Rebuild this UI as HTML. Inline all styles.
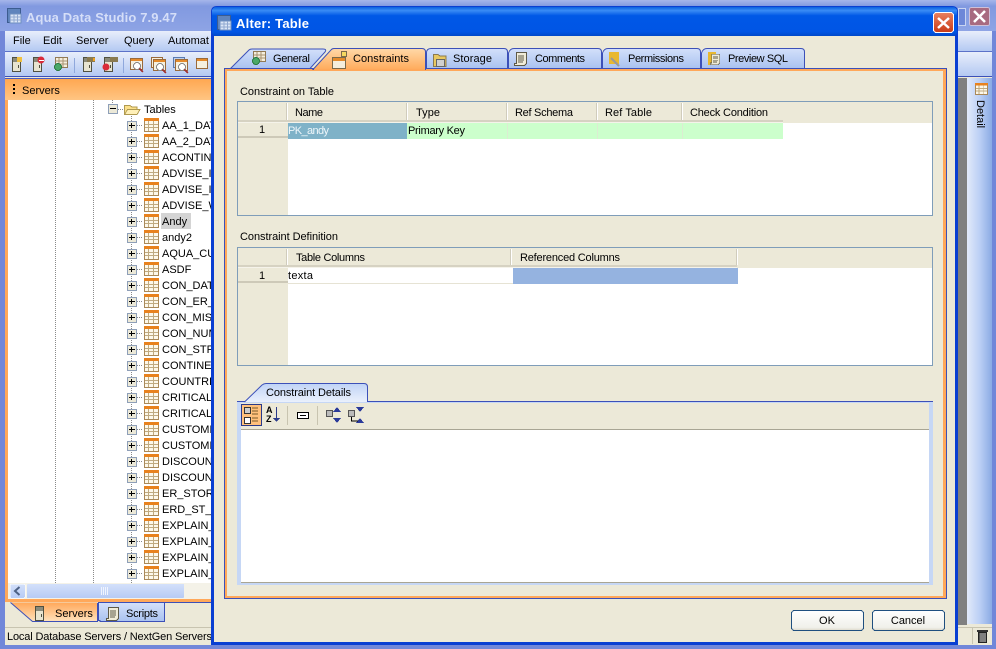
<!DOCTYPE html>
<html><head><meta charset="utf-8"><style>
html,body{margin:0;padding:0;background:#ece9d8;overflow:hidden}
svg{display:block}
text{font-family:"Liberation Sans",sans-serif;font-size:11px;fill:#000}
.t{font-weight:bold;font-size:13px}
</style></head><body>
<svg width="996" height="649" viewBox="0 0 996 649" xmlns="http://www.w3.org/2000/svg" shape-rendering="crispEdges">
<defs>
<linearGradient id="bar" x1="0" y1="0" x2="0" y2="1"><stop offset="0" stop-color="#e8eefb"/><stop offset="1" stop-color="#b4c9f2"/></linearGradient>
<linearGradient id="mtitle" x1="0" y1="0" x2="0" y2="1"><stop offset="0" stop-color="#a6b6ea"/><stop offset=".2" stop-color="#8199e0"/><stop offset="1" stop-color="#8ea4e5"/></linearGradient>
<linearGradient id="dtitle" x1="0" y1="0" x2="0" y2="1"><stop offset="0" stop-color="#0a5fdf"/><stop offset=".12" stop-color="#3a8cf5"/><stop offset=".3" stop-color="#0058e6"/><stop offset=".85" stop-color="#0055e5"/><stop offset="1" stop-color="#0048c8"/></linearGradient>
<linearGradient id="orange" x1="0" y1="0" x2="0" y2="1"><stop offset="0" stop-color="#ffa64f"/><stop offset="1" stop-color="#ffc98a"/></linearGradient>
<linearGradient id="orangeL" x1="0" y1="0" x2="0" y2="1"><stop offset="0" stop-color="#ffa85a"/><stop offset="1" stop-color="#ffe2bc"/></linearGradient>
<linearGradient id="orangeD" x1="0" y1="0" x2="0" y2="1"><stop offset="0" stop-color="#ffd9a8"/><stop offset="1" stop-color="#ffab5c"/></linearGradient>
<linearGradient id="tab" x1="0" y1="0" x2="0" y2="1"><stop offset="0" stop-color="#d3e0fa"/><stop offset="1" stop-color="#a9c2f0"/></linearGradient>
<linearGradient id="tabL" x1="0" y1="0" x2="0" y2="1"><stop offset="0" stop-color="#c0d3f6"/><stop offset="1" stop-color="#eaf0fc"/></linearGradient>
<linearGradient id="vtab" x1="0" y1="0" x2="1" y2="0"><stop offset="0" stop-color="#e2eafa"/><stop offset=".5" stop-color="#bcd0f5"/><stop offset="1" stop-color="#8aaae4"/></linearGradient>
<linearGradient id="sb" x1="0" y1="0" x2="0" y2="1"><stop offset="0" stop-color="#d3e0fa"/><stop offset="1" stop-color="#b7cbf5"/></linearGradient>
<linearGradient id="btn" x1="0" y1="0" x2="0" y2="1"><stop offset="0" stop-color="#fff"/><stop offset=".85" stop-color="#f0f0ea"/><stop offset="1" stop-color="#dcd8c8"/></linearGradient>
<linearGradient id="red" x1="0" y1="0" x2="0" y2="1"><stop offset="0" stop-color="#e9815f"/><stop offset="1" stop-color="#c93a16"/></linearGradient>
<symbol id="plus" width="10" height="10" viewBox="0 0 10 10"><rect x=".5" y=".5" width="9" height="9" fill="#ece9d8" stroke="#8e9fb8"/><path d="M2 4.500H8M4.500 2V7" stroke="#000"/></symbol>
<symbol id="minus" width="10" height="10" viewBox="0 0 10 10"><rect x=".5" y=".5" width="9" height="9" fill="#ece9d8" stroke="#8e9fb8"/><path d="M2 4.500H8" stroke="#000"/></symbol>
<symbol id="tbl" width="15" height="14" viewBox="0 0 15 14"><rect x=".5" y=".5" width="14" height="13" fill="#fdf8ea" stroke="#a98858"/><rect x="0" y="0" width="15" height="3" fill="#e8821e"/><path d="M1 6.500H14M1 9.500H14M4.500 3V13M9.500 3V13" stroke="#c0aa80"/></symbol>
<symbol id="app" width="15" height="16" viewBox="0 0 15 16"><rect x=".5" y=".5" width="13" height="14" fill="#5f84bd" stroke="#3c5c90"/><rect x="3" y="6" width="11" height="9" fill="#dbe6f6" stroke="#6f8fc0" stroke-width=".7"/><path d="M3 9H14M3 12H14M7 6V15M10.500 6V15" stroke="#90a8d0"/></symbol>
<symbol id="srv" width="12" height="17" viewBox="0 0 12 17"><rect x="2.500" y="1.500" width="8" height="14" fill="#e8e4d0" stroke="#505040"/><rect x="3" y="2" width="7" height="4" fill="#8a8a7a"/><rect x="8" y="9" width="1" height="3" fill="#505040"/></symbol>
<symbol id="grid" width="15" height="14" viewBox="0 0 15 14"><rect x="2.500" y=".5" width="12" height="10" fill="#f5eedc" stroke="#927a55"/><path d="M3 4H14M3 7H14M6 1V10M10 1V10" stroke="#a89270"/><circle cx="5" cy="10" r="3.500" fill="#4aa868" stroke="#2c7a45"/></symbol>
<symbol id="find" width="16" height="16" viewBox="0 0 16 16"><rect x=".5" y=".5" width="12" height="11" fill="#f5f0e0" stroke="#9a6a3a"/><rect x="1" y="1" width="11" height="2" fill="#e58a2a"/><circle cx="7" cy="8" r="3.500" fill="#fff" stroke="#888"/><path d="M9.500 10.500L13 14" stroke="#a03030" stroke-width="1.500"/></symbol>
<symbol id="scroll" width="15" height="16" viewBox="0 0 15 16"><path d="M3.500 1.500H13.500V12.500L11.500 14.500H1.500V12.500H3.500Z" fill="#f0ecd8" stroke="#5e5a48"/><path d="M5 5H11M5 7H11M5 9H11M5 11H10" stroke="#5e5a48"/></symbol>
</defs>

<!-- main window -->
<rect width="996" height="649" fill="#7187d9"/>
<rect x="0" y="0" width="996" height="31" fill="url(#mtitle)"/>
<rect x="5" y="31" width="987" height="20" fill="url(#bar)"/>
<rect x="5" y="51" width="987" height="1" fill="#5c72c8"/>
<rect x="5" y="52" width="987" height="24" fill="url(#bar)"/>
<rect x="5" y="76" width="987" height="1" fill="#3c50b8"/>
<rect x="5" y="77" width="987" height="550" fill="#ece9d8"/>
<rect x="5" y="627" width="987" height="1" fill="#c8c4b0"/>
<rect x="5" y="628" width="987" height="17" fill="#ece9d8"/>
<use href="#app" x="7" y="8"/>
<text x="26" y="22" class="t" style="fill:#d5def8" textLength="151">Aqua Data Studio 7.9.47</text>
<text x="13" y="44">File</text><text x="43" y="44">Edit</text><text x="76" y="44">Server</text><text x="124" y="44">Query</text><text x="168" y="44">Automat</text>

<!-- toolbar -->
<use href="#srv" x="10" y="56"/><rect x="17" y="57" width="5" height="5" fill="#f0c040"/>
<use href="#srv" x="31" y="56"/><circle cx="41" cy="60" r="3.500" fill="#d92b3a" shape-rendering="auto"/><rect x="39" y="60" width="5" height="1" fill="#fff"/>
<use href="#grid" x="53" y="57"/>
<rect x="74" y="58" width="1" height="15" fill="#8fa8dc"/>
<use href="#srv" x="81" y="56"/><rect x="87" y="57" width="8" height="5" fill="#8a7a50"/><rect x="93" y="58" width="2" height="3" fill="#f0a020"/>
<use href="#srv" x="102" y="56"/><circle cx="106" cy="67" r="3.500" fill="#d92b3a" shape-rendering="auto"/><rect x="110" y="57" width="8" height="5" fill="#8a7a50"/>
<rect x="123" y="58" width="1" height="15" fill="#8fa8dc"/>
<use href="#find" x="130" y="58"/>
<rect x="151.500" y="57.500" width="11" height="10" fill="#f5f0e0" stroke="#9a6a3a"/><use href="#find" x="153" y="59"/>
<rect x="173.500" y="57.500" width="11" height="10" fill="#bcd0f0" stroke="#5a7ab0"/><use href="#find" x="175" y="59"/>
<rect x="196.500" y="58.500" width="11" height="10" fill="#f5f0e0" stroke="#9a6a3a"/><rect x="197" y="59" width="10" height="2" fill="#e58a2a"/>

<!-- servers panel -->
<rect x="5" y="78" width="206" height="25" fill="url(#orange)"/>
<rect x="5" y="78" width="206" height="1" fill="#4a5cc0"/>
<rect x="5" y="100" width="3" height="502" fill="#ffa85a"/>
<rect x="5" y="599" width="206" height="3" fill="#ffa85a"/>
<rect x="98" y="602" width="113" height="1" fill="#3c50b8"/>
<rect x="13" y="84" width="2" height="2" fill="#000"/><rect x="13" y="88" width="2" height="2" fill="#000"/><rect x="13" y="92" width="2" height="2" fill="#000"/>
<text x="22" y="94">Servers</text>
<rect x="8" y="100" width="203" height="483" fill="#fff"/>
<path d="M55.500 100V583M93.500 100V583M131.500 114V583M112.500 100V105" stroke="#8a8a8a" stroke-dasharray="1 1" fill="none"/>
<use href="#minus" x="108" y="104"/>
<path d="M118 109.500H123" stroke="#8a8a8a" stroke-dasharray="1 1"/>
<path d="M124.500 114.500V105.500H130L132 107H137V114.500Z" fill="#fbe08a" stroke="#b09a50"/><path d="M124.500 114.500L127.500 109.500H140L137 114.500Z" fill="#fff0b8" stroke="#b09a50"/>
<text x="144" y="113">Tables</text>
<rect x="161" y="213" width="30" height="16" fill="#d4d4d4"/>
<path d="M137 125.500H143M137 141.500H143M137 157.500H143M137 173.500H143M137 189.500H143M137 205.500H143M137 221.500H143M137 237.500H143M137 253.500H143M137 269.500H143M137 285.500H143M137 301.500H143M137 317.500H143M137 333.500H143M137 349.500H143M137 365.500H143M137 381.500H143M137 397.500H143M137 413.500H143M137 429.500H143M137 445.500H143M137 461.500H143M137 477.500H143M137 493.500H143M137 509.500H143M137 525.500H143M137 541.500H143M137 557.500H143M137 573.500H143" stroke="#8a8a8a" stroke-dasharray="1 1"/>
<g id="rows">
<g><use href="#plus" x="127" y="121"/><use href="#tbl" x="144" y="118"/><text x="162" y="129">AA_1_DAT</text></g>
<g><use href="#plus" x="127" y="137"/><use href="#tbl" x="144" y="134"/><text x="162" y="145">AA_2_DAT</text></g>
<g><use href="#plus" x="127" y="153"/><use href="#tbl" x="144" y="150"/><text x="162" y="161">ACONTINE</text></g>
<g><use href="#plus" x="127" y="169"/><use href="#tbl" x="144" y="166"/><text x="162" y="177">ADVISE_IN</text></g>
<g><use href="#plus" x="127" y="185"/><use href="#tbl" x="144" y="182"/><text x="162" y="193">ADVISE_IN</text></g>
<g><use href="#plus" x="127" y="201"/><use href="#tbl" x="144" y="198"/><text x="162" y="209">ADVISE_W</text></g>
<g><use href="#plus" x="127" y="217"/><use href="#tbl" x="144" y="214"/><text x="162" y="225">Andy</text></g>
<g><use href="#plus" x="127" y="233"/><use href="#tbl" x="144" y="230"/><text x="162" y="241">andy2</text></g>
<g><use href="#plus" x="127" y="249"/><use href="#tbl" x="144" y="246"/><text x="162" y="257">AQUA_CU</text></g>
<g><use href="#plus" x="127" y="265"/><use href="#tbl" x="144" y="262"/><text x="162" y="273">ASDF</text></g>
<g><use href="#plus" x="127" y="281"/><use href="#tbl" x="144" y="278"/><text x="162" y="289">CON_DAT</text></g>
<g><use href="#plus" x="127" y="297"/><use href="#tbl" x="144" y="294"/><text x="162" y="305">CON_ER_</text></g>
<g><use href="#plus" x="127" y="313"/><use href="#tbl" x="144" y="310"/><text x="162" y="321">CON_MISC</text></g>
<g><use href="#plus" x="127" y="329"/><use href="#tbl" x="144" y="326"/><text x="162" y="337">CON_NUM</text></g>
<g><use href="#plus" x="127" y="345"/><use href="#tbl" x="144" y="342"/><text x="162" y="353">CON_STR</text></g>
<g><use href="#plus" x="127" y="361"/><use href="#tbl" x="144" y="358"/><text x="162" y="369">CONTINEN</text></g>
<g><use href="#plus" x="127" y="377"/><use href="#tbl" x="144" y="374"/><text x="162" y="385">COUNTRIE</text></g>
<g><use href="#plus" x="127" y="393"/><use href="#tbl" x="144" y="390"/><text x="162" y="401">CRITICAL</text></g>
<g><use href="#plus" x="127" y="409"/><use href="#tbl" x="144" y="406"/><text x="162" y="417">CRITICAL</text></g>
<g><use href="#plus" x="127" y="425"/><use href="#tbl" x="144" y="422"/><text x="162" y="433">CUSTOME</text></g>
<g><use href="#plus" x="127" y="441"/><use href="#tbl" x="144" y="438"/><text x="162" y="449">CUSTOME</text></g>
<g><use href="#plus" x="127" y="457"/><use href="#tbl" x="144" y="454"/><text x="162" y="465">DISCOUNT</text></g>
<g><use href="#plus" x="127" y="473"/><use href="#tbl" x="144" y="470"/><text x="162" y="481">DISCOUNT</text></g>
<g><use href="#plus" x="127" y="489"/><use href="#tbl" x="144" y="486"/><text x="162" y="497">ER_STORA</text></g>
<g><use href="#plus" x="127" y="505"/><use href="#tbl" x="144" y="502"/><text x="162" y="513">ERD_ST_T</text></g>
<g><use href="#plus" x="127" y="521"/><use href="#tbl" x="144" y="518"/><text x="162" y="529">EXPLAIN_</text></g>
<g><use href="#plus" x="127" y="537"/><use href="#tbl" x="144" y="534"/><text x="162" y="545">EXPLAIN_</text></g>
<g><use href="#plus" x="127" y="553"/><use href="#tbl" x="144" y="550"/><text x="162" y="561">EXPLAIN_</text></g>
<g><use href="#plus" x="127" y="569"/><use href="#tbl" x="144" y="566"/><text x="162" y="577">EXPLAIN_</text></g>
</g>
<!-- scrollbar -->
<rect x="8" y="583" width="203" height="16" fill="#f4f2e8"/>
<rect x="10" y="584" width="15" height="14" rx="1" fill="url(#sb)" stroke="#fff" stroke-width=".5"/>
<path d="M19.500 587L15 591L19.500 595" fill="none" stroke="#4d6185" stroke-width="2" shape-rendering="auto"/>
<rect x="27" y="584" width="157" height="14" rx="1" fill="url(#sb)"/>
<path d="M101.500 587V595M103.500 587V595M105.500 587V595M107.500 587V595" stroke="#f0f4fe"/>
<!-- bottom tabs -->
<path d="M10.500 602.500L32.500 621.500H97.500V602.500Z" fill="url(#orangeL)" stroke="none" shape-rendering="auto"/>
<path d="M10.500 602.500L32.500 621.500H97.500V603" fill="none" stroke="#3c50b8" shape-rendering="auto"/>
<use href="#srv" x="33" y="605"/>
<text x="55" y="617">Servers</text>
<path d="M98.500 603V620.500H100V621.500H164.500V603" fill="url(#tab)" stroke="#3c50b8"/>
<use href="#scroll" x="105" y="606"/>
<text x="126" y="617" textLength="32">Scripts</text>
<text x="7" y="640" textLength="205">Local Database Servers / NextGen Servers</text>

<!-- right of dialog -->
<rect x="958.500" y="8.500" width="7" height="17" fill="#6d87d8" stroke="#c8d4f2"/>
<rect x="969.500" y="7.500" width="20" height="18" rx="2" fill="#a86a80" stroke="#cfc0d8"/>
<path d="M974 11L985 22M985 11L974 22" stroke="#fff" stroke-width="2.500" shape-rendering="auto"/>
<rect x="958" y="78" width="9" height="547" fill="#808080"/>
<rect x="967" y="78" width="25" height="546" fill="url(#vtab)"/>
<rect x="992" y="31" width="4" height="618" fill="#7187d9"/>
<use href="#tbl" x="974" y="83" width="15" height="12"/>
<text transform="translate(977,100) rotate(90)">Detail</text>
<rect x="972" y="628" width="1" height="16" fill="#c8c4b0"/>
<rect x="978.500" y="632.500" width="8" height="10" fill="#555" stroke="#222"/><rect x="977" y="630" width="11" height="2" fill="#333"/><path d="M981 633V642M983 633V642M985 633V642" stroke="#aaa"/>

<!-- dialog -->
<path d="M211 645V12Q211 6 217 6H952Q958 6 958 12V645Z" fill="#0a3fd2" shape-rendering="auto"/>
<rect x="212" y="7" width="745" height="29" rx="4" fill="url(#dtitle)"/>
<rect x="214" y="36" width="741" height="606" fill="#ece9d8"/>
<use href="#app" x="217" y="15"/>
<text x="236" y="28" class="t" style="fill:#fff" textLength="73">Alter: Table</text>
<rect x="933.500" y="12.500" width="20" height="20" rx="3" fill="url(#red)" stroke="#fff"/>
<path d="M938 18L949 28M949 18L938 28" stroke="#fff" stroke-width="2.500" shape-rendering="auto"/>

<!-- tab panel -->
<rect x="224.500" y="68.500" width="722" height="530" fill="#ffa85a" stroke="#3c50b8"/>
<rect x="225" y="69" width="721" height="529" fill="#ffa85a"/>
<rect x="227" y="71" width="716" height="525" fill="#ece9d8"/>
<!-- tabs -->
<g shape-rendering="auto">
<path d="M230.500 68.500L249 50Q250 49 252 49H323Q327 49 325 52L310 68.500Z" fill="url(#tab)" stroke="#3c50b8"/>
<path d="M426.500 68.500V53Q426.500 48.500 431 48.500H504Q507.500 48.500 507.500 52V68.500Z" fill="url(#tab)" stroke="#3c50b8"/>
<path d="M508.500 68.500V53Q510 48.500 514 48.500H598Q601.500 48.500 601.500 52V68.500Z" fill="url(#tab)" stroke="#3c50b8"/>
<path d="M602.500 68.500V53Q604 48.500 608 48.500H697Q700.500 48.500 700.500 52V68.500Z" fill="url(#tab)" stroke="#3c50b8"/>
<path d="M701.500 68.500V53Q703 48.500 707 48.500H801Q804.500 48.500 804.500 52V68.500Z" fill="url(#tab)" stroke="#3c50b8"/>
<path d="M313 69.500L331 50Q332 48.500 334 48.500H422Q425.500 48.500 425.500 52V69.500Z" fill="url(#orangeD)" stroke="#3c50b8"/>
</g>
<rect x="314" y="69" width="111" height="2" fill="#ffa85a"/>
<use href="#grid" x="251" y="51"/>
<rect x="332.500" y="57.500" width="13" height="11" fill="#f5eedc" stroke="#7a6a4a"/><rect x="333" y="58" width="12" height="3" fill="#e58a2a"/><rect x="341.500" y="51.500" width="5" height="5" fill="#f5d860" stroke="#7a6a4a"/>
<path d="M433.500 54.500H438L440 56H446V66.500H433.500Z" fill="#e8c860" stroke="#8a7a50"/><rect x="436.500" y="59.500" width="8" height="7" fill="#d0d0d0" stroke="#666"/>
<use href="#scroll" x="513" y="51"/>
<rect x="609" y="52" width="10" height="12" fill="#e8b830"/><path d="M611 58L619 66" stroke="#999" stroke-width="2" shape-rendering="auto"/>
<rect x="708" y="52" width="8" height="13" fill="#e8b830"/><use href="#scroll" x="709" y="53" width="12" height="13"/>
<text x="273" y="62" textLength="37">General</text><text x="353" y="62" textLength="56">Constraints</text><text x="453" y="62" textLength="39">Storage</text><text x="535" y="62" textLength="50">Comments</text><text x="628" y="62" textLength="56">Permissions</text><text x="728" y="62" textLength="60">Preview SQL</text>

<!-- Constraint on Table -->
<text x="240" y="95" textLength="94">Constraint on Table</text>
<rect x="237.500" y="101.500" width="695" height="114" fill="#ece9d8" stroke="#7f9db9"/>
<rect x="288" y="123" width="644" height="92" fill="#fff"/>
<rect x="238" y="120" width="545" height="2" fill="#d6d2c2"/>
<rect x="238" y="122" width="545" height="1" fill="#f5f3ea"/>
<path d="M286.500 103V120M406.500 103V120M506.500 103V120M596.500 103V120M681.500 103V120" stroke="#d0ccbc"/>
<path d="M287.500 103V120M407.500 103V120M507.500 103V120M597.500 103V120M682.500 103V120" stroke="#fff"/>
<rect x="288" y="123" width="119" height="16" fill="#7fb2c8"/>
<rect x="407" y="123" width="376" height="16" fill="#ccffcc"/>
<path d="M507.500 123V139M597.500 123V139M682.500 123V139" stroke="#dcecd2"/>
<rect x="238" y="136" width="50" height="2" fill="#cdc9b8"/>
<text x="295" y="116" textLength="28">Name</text><text x="416" y="116" textLength="24">Type</text><text x="515" y="116" textLength="58">Ref Schema</text><text x="605" y="116" textLength="47">Ref Table</text><text x="690" y="116" textLength="78">Check Condition</text>
<text x="259" y="133">1</text>
<text x="288" y="134" style="fill:#eef6fa" textLength="41">PK_andy</text><text x="408" y="134" textLength="57">Primary Key</text>

<!-- Constraint Definition -->
<text x="240" y="240" textLength="98">Constraint Definition</text>
<rect x="237.500" y="247.500" width="695" height="118" fill="#ece9d8" stroke="#7f9db9"/>
<rect x="288" y="268" width="644" height="97" fill="#fff"/>
<rect x="238" y="265" width="499" height="2" fill="#d6d2c2"/>
<rect x="238" y="267" width="499" height="1" fill="#f5f3ea"/>
<path d="M286.500 249V265M510.500 249V265M736.500 249V265" stroke="#d0ccbc"/>
<path d="M287.500 249V265M511.500 249V265M737.500 249V265" stroke="#fff"/>
<rect x="288" y="283" width="225" height="1" fill="#e6e3d4"/>
<rect x="513" y="268" width="225" height="16" fill="#95b3e0"/>
<rect x="238" y="281" width="50" height="2" fill="#cdc9b8"/>
<text x="296" y="261" textLength="69">Table Columns</text><text x="520" y="261" textLength="100">Referenced Columns</text>
<text x="259" y="279">1</text><text x="288" y="279" textLength="25">texta</text>

<!-- Constraint Details -->
<rect x="237" y="401" width="696" height="1" fill="#3c50b8"/>
<rect x="237" y="402" width="696" height="183" fill="#c6d7f5"/>
<rect x="241" y="403" width="688" height="26" fill="#ece9d8"/>
<path d="M244.500 402L262 385Q264 383.500 266 383.500H364Q367.500 383.500 367.500 387V402" fill="url(#tabL)" stroke="#3c50b8" shape-rendering="auto"/>
<text x="266" y="396" textLength="85">Constraint Details</text>
<rect x="241.500" y="404.500" width="20" height="21" fill="#ffc07c" stroke="#2a3a8a"/>
<rect x="244.500" y="407.500" width="6" height="6" fill="#ccc" stroke="#333"/><rect x="244.500" y="417.500" width="6" height="6" fill="#fff" stroke="#333"/>
<path d="M252 408H258M252 411H258M252 414H258M252 418H258M252 421H258" stroke="#7a5a2a"/>
<text x="266" y="413" style="font-size:9px;font-weight:bold">A</text><text x="266" y="422" style="font-size:9px;font-weight:bold">Z</text>
<path d="M276.500 407V418" stroke="#2a3a8a"/><path d="M273 418H280L276.500 422Z" fill="#2a3a8a"/>
<rect x="287" y="406" width="1" height="19" fill="#c8c4b0"/>
<rect x="297.500" y="412.500" width="11" height="6" fill="#fff" stroke="#000"/><path d="M300 415.500H306" stroke="#000"/>
<rect x="317" y="406" width="1" height="19" fill="#c8c4b0"/>
<rect x="326.500" y="410.500" width="6" height="6" fill="#bbb" stroke="#555"/><path d="M337 407L341 412H333ZM337 423L341 418H333Z" fill="#2a3a9a"/>
<rect x="348.500" y="410.500" width="6" height="6" fill="#bbb" stroke="#555"/><path d="M360 412L364 407H356ZM360 418L364 423H356Z" fill="#2a3a9a"/><path d="M351.500 417V421H358" stroke="#000" fill="none"/>
<rect x="241" y="429" width="688" height="1" fill="#a8a594"/>
<rect x="241" y="430" width="688" height="152" fill="#fff"/>
<rect x="241" y="582" width="688" height="1" fill="#a8a594"/>

<!-- buttons -->
<rect x="791.500" y="610.500" width="72" height="20" rx="3" fill="url(#btn)" stroke="#1f4f7f"/>
<rect x="872.500" y="610.500" width="72" height="20" rx="3" fill="url(#btn)" stroke="#1f4f7f"/>
<text x="827" y="624" text-anchor="middle">OK</text><text x="908" y="624" text-anchor="middle">Cancel</text>
</svg>
</body></html>
